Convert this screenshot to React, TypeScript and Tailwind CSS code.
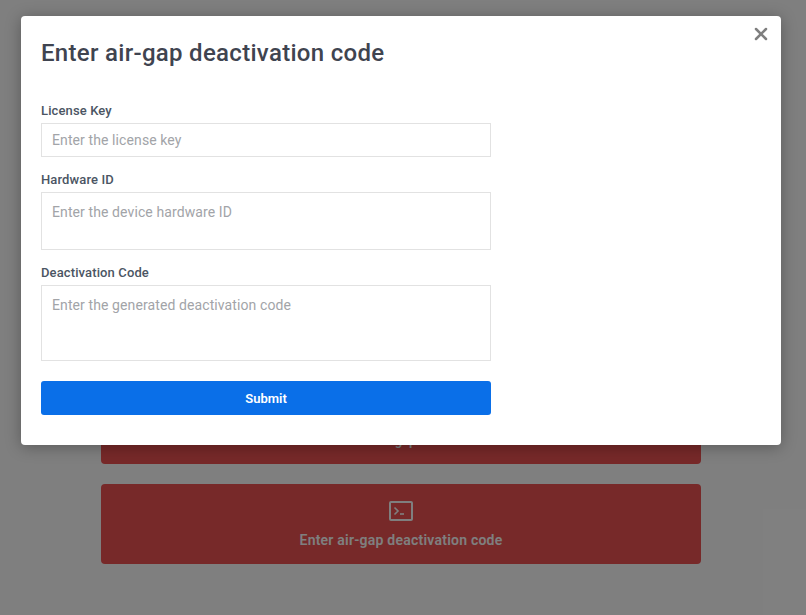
import React from 'react';
import { X } from 'lucide-react';

function Field({ label, placeholder, rows }: { label: string; placeholder: string; rows?: string }) {
  return (
    <div className="flex flex-col">
      <label className="mb-[2px] pt-px text-[13px] leading-[20px] font-medium tracking-[0.12px] text-[#4b5563]">{label}</label>
      {rows ? (
        <textarea
          placeholder={placeholder}
          readOnly
          className={`${rows} w-full border border-[#e2e2e2] px-[10px] py-[9px] text-sm leading-[20px] tracking-[0.1px] text-gray-700 placeholder:text-[#a2a4a8] resize-none outline-none`}
        />
      ) : (
        <input
          placeholder={placeholder}
          readOnly
          className="h-[34px] w-full border border-[#e2e2e2] px-[10px] text-sm tracking-[0.1px] text-gray-700 placeholder:text-[#a2a4a8] outline-none"
        />
      )}
    </div>
  );
}

function App() {
  return (
    <div className="relative min-h-[615px] bg-white pr-1 font-['Roboto',sans-serif]">
      {/* Page behind the dialog */}
      <main className="mx-auto flex w-[600px] flex-col gap-5 pt-[384px] pb-[51px]">
        <div className="flex h-20 flex-col items-center justify-end rounded bg-[#ee5252] pb-[14px]">
          <span className="text-[13px] font-semibold text-white">Use air-gap mode</span>
        </div>
        <div className="flex h-20 flex-col items-center justify-center gap-[9px] rounded bg-[#ee5252] pt-[3px]">
          <svg width="24" height="20" viewBox="0 0 24 20" fill="none" stroke="white" strokeWidth="2">
            <rect x="1" y="1" width="22" height="18" rx="1" />
            <path d="M5.5 6.5 9 10 5.5 13.5" strokeWidth="1.6" />
            <path d="M11 13h4" strokeWidth="1.6" />
          </svg>
          <span className="text-sm leading-[20px] font-semibold tracking-[0.23px] text-white">Enter air-gap deactivation code</span>
        </div>
      </main>

      {/* Dialog */}
      <div className="absolute inset-0 bg-black/50 pr-1">
        <div className="relative mx-auto mt-4 h-[429px] w-[760px] rounded-sm bg-white px-5 pt-[21px] shadow-[0_2px_16px_rgba(0,0,0,0.3)]">
          <button className="absolute right-[10px] top-[8px] text-[#7f7f7f]">
            <X size={20} strokeWidth={3} />
          </button>
          <h2 className="text-[24px] leading-[32px] font-medium tracking-[0.3px] text-[#3f4450]">Enter air-gap deactivation code</h2>
          <form className="mt-[31px] flex w-[450px] flex-col gap-3">
            <Field label="License Key" placeholder="Enter the license key" />
            <Field label="Hardware ID" placeholder="Enter the device hardware ID" rows="h-[58px]" />
            <Field label="Deactivation Code" placeholder="Enter the generated deactivation code" rows="h-[76px]" />
            <button type="button" className="mt-2 h-[34px] rounded-[3px] bg-[#0a6fe8] pt-px text-[13px] font-semibold text-white">
              Submit
            </button>
          </form>
        </div>
      </div>
    </div>
  );
}

export default App;
